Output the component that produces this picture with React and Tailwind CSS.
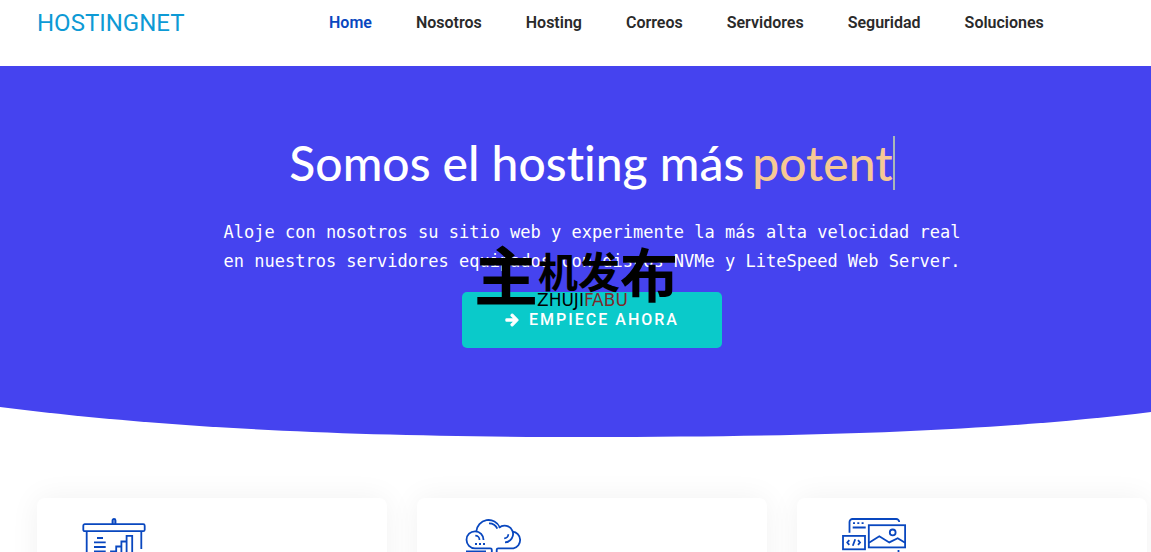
import { FaArrowRight } from "react-icons/fa";

const links = ["Home", "Nosotros", "Hosting", "Correos", "Servidores", "Seguridad", "Soluciones"];

const BoardIcon = () => (
  <svg className="size-16" viewBox="0 0 64 64" fill="none" stroke="#0947bf" strokeWidth="1.8" aria-hidden="true">
    <path d="M30.5 6V2.5a1.5 1.5 0 0 1 3 0V6" fill="#8aa8e2" />
    <rect x="1.3" y="6.2" width="61.4" height="7" rx="1.5" />
    <path d="M4.7 13v37M59.3 13v18M59.3 34v16M4.7 50h54.6" />
    <path d="M15 20h6M12 24.4h11.7M12 29h11.7M12 33.5h11.7" />
    <path d="M29 44V33.3h5.2V44V28.5h5.2V44V23.5h5.2V44V17.8h5.6V44z" />
  </svg>
);

const CloudIcon = () => (
  <svg className="size-16" viewBox="0 0 64 64" fill="none" stroke="#0947bf" strokeWidth="1.8" aria-hidden="true">
    <path d="M29.8 36v-4.2a1.5 1.5 0 0 0-1.5-1.5H13a8.5 8.5 0 1 1 8.5-8.3" />
    <path d="M14.3 13.5a12.3 12.3 0 0 1 23.6-4" />
    <path d="M37 9.8a8.4 8.4 0 1 1 6 14.6" />
    <path d="M50.5 13.7a8.4 8.4 0 0 1 .9 16.6H36.2a1.5 1.5 0 0 0-1.5 1.5V36" />
    <path d="M27 5.3a9 9 0 0 1 8.3 5.4M13.3 17.7a4.2 4.2 0 0 1 4.2 4.2M46.3 16.2a4.2 4.2 0 0 1-4.1 4.1" />
    <path d="M13 26h2M17 26h2M21 26h2M4 33.5h20" />
  </svg>
);

const DesignIcon = () => (
  <svg className="size-16" viewBox="0 0 64 64" fill="none" stroke="#0947bf" strokeWidth="1.8" aria-hidden="true">
    <path d="M7.5 14.7V4a3 3 0 0 1 3-3h43.7a3 3 0 0 1 3 3M56.5 32v10" />
    <path d="M11 5.2h2M15.3 5.2h2M19.6 5.2h2M10.7 9.5h13" />
    <rect x="26.8" y="7.2" width="36.3" height="22.2" />
    <circle cx="50.7" cy="14.4" r="2.9" />
    <path d="M27 24.7l10.3-6.5 10 6.2 8.4-4.2 7.4 4.5" />
    <rect x="1" y="17.9" width="22" height="13.4" />
    <path d="M7.3 22.2l-2 2.3 2 2.3M13.2 21.3l-2.4 6.4M16 22.2l2 2.3-2 2.3" />
  </svg>
);

const Header = () => (
  <header className="flex h-[66px] items-start pt-[6px] pl-[37px]">
    <a href="#" className="w-[292px] shrink-0 text-2xl leading-[34px] text-[#0d9ad5]">
      HOSTINGNET
    </a>
    <nav className="flex gap-11 text-base leading-[34px] font-semibold text-[#2a2a2a]">
      {links.map((link, i) => (
        <a key={link} href="#" className={i === 0 ? "text-[#0947bf]" : "hover:text-[#0947bf]"}>
          {link}
        </a>
      ))}
    </nav>
  </header>
);

const Watermark = () => (
  <div className="pointer-events-none absolute top-[-44px] left-[12px] font-['Noto_Sans_CJK_SC',sans-serif] font-bold text-black">
    <div className="flex items-start whitespace-nowrap">
      <span className="text-[64px] leading-[48px]">主</span>
      <span className="text-[40px] leading-[44px]">机</span>
      <span className="text-[42px] leading-[44px]">发</span>
      <span className="text-[58px] leading-[48px]">布</span>
    </div>
    <div className="absolute top-[44px] left-[63px] font-['DejaVu_Sans',sans-serif] text-[17px] leading-4 font-normal">
      ZHUJI<span className="text-[#7d2a2a]">FABU</span>
    </div>
  </div>
);

const Hero = () => (
  <section>
    <div className="bg-[#4543ef] pt-[70px] pb-14 pl-[33px] text-white">
      <h1 className="flex items-center justify-center gap-2 font-['Lato',sans-serif] text-5xl leading-[54px] font-medium [font-variant-ligatures:none]">
        <span>Somos el hosting más</span>
        <span className="border-r-2 border-[#a9b8b8] text-[#f6c994]">potent</span>
      </h1>
      <p className="mt-7 text-center font-['DejaVu_Sans_Mono',monospace] text-[17px] leading-[29px]">
        Aloje con nosotros su sitio web y experimente la más alta velocidad real
        <br />
        en nuestros servidores equipados con discos NVMe y LiteSpeed Web Server.
      </p>
      <div className="mt-4 flex justify-center">
        <div className="relative">
          <button className="flex h-14 w-[260px] items-center justify-center gap-[10px] rounded-[5px] bg-[#0acaca] text-base font-medium tracking-[2px] text-white">
            <FaArrowRight className="size-[14px] stroke-white stroke-[40]" />
            EMPIECE AHORA
          </button>
          <Watermark />
        </div>
      </div>
    </div>
    <svg className="block h-[34px] w-full" viewBox="0 0 1151 34" preserveAspectRatio="none" aria-hidden="true">
      <path d="M0 0H1151V8C1010 25 850 33 588 33S150 22 0 3z" fill="#4543ef" />
    </svg>
  </section>
);

const cards = [BoardIcon, CloudIcon, DesignIcon];

export default function App() {
  return (
    <div className="h-screen overflow-hidden bg-white font-['Roboto',sans-serif]">
      <Header />
      <Hero />
      <div className="mt-[60px] grid grid-cols-3 gap-[30px] pr-1 pl-[37px]">
        {cards.map((Icon, i) => (
          <div key={i} className="rounded-lg bg-white pt-5 pb-11 pl-[45px] shadow-[0_0_30px_rgba(0,0,0,0.06)]">
            <Icon />
          </div>
        ))}
      </div>
    </div>
  );
}
